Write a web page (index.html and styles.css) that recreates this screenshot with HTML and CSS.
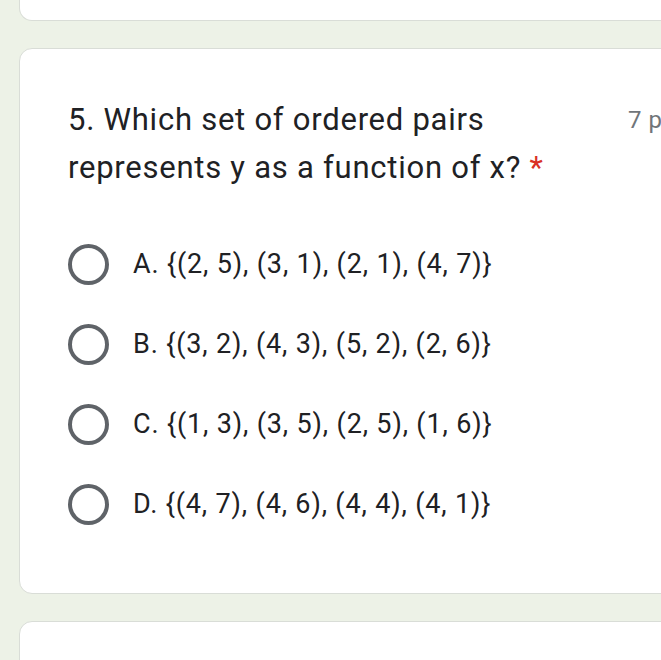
FILE: index.html
```html
<!DOCTYPE html>
<html>
<head>
<meta charset="utf-8">
<link rel="stylesheet" href="styles.css">
</head>
<body>
<div class="page">
  <div class="card card-prev"></div>
  <div class="card card-main">
    <div class="header">
      <div class="title">5. Which set of ordered pairs represents y as a function of x? <span class="req">*</span></div>
      <div class="points">7 points</div>
    </div>
    <div class="options">
      <div class="option"><span class="radio"></span><span class="label">A. {(2, 5), (3, 1), (2, 1), (4, 7)}</span></div>
      <div class="option"><span class="radio"></span><span class="label">B. {(3, 2), (4, 3), (5, 2), (2, 6)}</span></div>
      <div class="option"><span class="radio"></span><span class="label">C. {(1, 3), (3, 5), (2, 5), (1, 6)}</span></div>
      <div class="option"><span class="radio"></span><span class="label">D. {(4, 7), (4, 6), (4, 4), (4, 1)}</span></div>
    </div>
  </div>
  <div class="card card-next"></div>
</div>
</body>
</html>
```
FILE: styles.css
```css
html, body {
  margin: 0;
  padding: 0;
  background: #edf2e7;
  overflow: hidden;
}
.page {
  width: 661px;
  height: 660px;
  overflow: hidden;
  display: flex;
  flex-direction: column;
  gap: 27px;
  font-family: Roboto, "Liberation Sans", sans-serif;
}
.card {
  margin-left: 19px;
  width: 720px;
  flex: none;
  background: #fff;
  border: 1px solid #d9ddd7;
  border-radius: 13px;
  box-sizing: border-box;
}
.card-prev {
  height: 21px;
  border-top: none;
  border-radius: 0 0 13px 13px;
}
.card-main {
  height: 546px;
  padding: 47px 0 0 48px;
}
.card-next {
  height: 80px;
}
.header {
  display: flex;
  align-items: flex-start;
}
.title {
  width: 500px;
  flex: none;
  font-size: 31px;
  line-height: 48px;
  letter-spacing: 0.75px;
  color: #202124;
}
.req {
  color: #d93025;
}
.points {
  margin-left: 60px;
  font-size: 24px;
  line-height: 48px;
  letter-spacing: 0.5px;
  color: #70757a;
  white-space: nowrap;
}
.options {
  margin-top: 52px;
  display: flex;
  flex-direction: column;
  gap: 40px;
}
.option {
  display: flex;
  align-items: center;
  height: 40px;
}
.radio {
  width: 41px;
  height: 41px;
  box-sizing: border-box;
  border: 4px solid #5f6368;
  border-radius: 50%;
  flex: none;
}
.label {
  margin-left: 24px;
  font-size: 27px;
  letter-spacing: 0.85px;
  color: #202124;
}
```
